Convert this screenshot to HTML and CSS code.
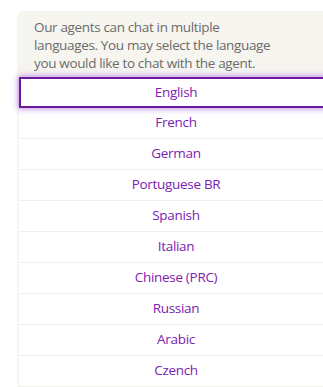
FILE: index.html
```html
<!DOCTYPE html>
<html>
<head>
<meta charset="utf-8">
<link rel="stylesheet" href="styles.css">
</head>
<body>
<div class="panel">
  <p class="intro">Our agents can chat in multiple<br>languages. You may select the language<br>you would like to chat with the agent.</p>
  <ul class="langs">
    <li class="lang active">English</li>
    <li class="lang">French</li>
    <li class="lang">German</li>
    <li class="lang">Portuguese BR</li>
    <li class="lang">Spanish</li>
    <li class="lang">Italian</li>
    <li class="lang">Chinese (PRC)</li>
    <li class="lang">Russian</li>
    <li class="lang">Arabic</li>
    <li class="lang">Czench</li>
  </ul>
</div>
</body>
</html>
```
FILE: styles.css
```css
html, body {
  margin: 0;
  padding: 0;
  background: #ffffff;
  font-family: "Open Sans", Lato, sans-serif;
  overflow: hidden;
}
body {
  padding: 11px 0 0 17px;
}
.panel {
  width: 314px;
  background: #f6f5f0;
  border-radius: 7px 0 0 0;
  padding: 0 0 1px 2px;
}
.intro {
  margin: 0;
  padding: 7px 0 5px 15px;
  font-size: 13.5px;
  letter-spacing: -0.35px;
  line-height: 18px;
  color: #6b6b6b;
  white-space: nowrap;
}
.langs {
  list-style: none;
  margin: 0;
  padding: 0;
}
.lang {
  height: 29px;
  padding-bottom: 1px;
  line-height: 29px;
  text-align: center;
  background: #ffffff;
  border-bottom: 1px solid #f1f0ea;
  color: #7b22b0;
  font-size: 13.5px;
  letter-spacing: -0.3px;
}
.lang.active {
  height: 27px;
  padding-bottom: 0;
  line-height: 27px;
  border: 2px solid #6a1b9a;
  box-shadow: 0 0 6px 1px rgba(150, 70, 220, 0.6);
  position: relative;
}
```
